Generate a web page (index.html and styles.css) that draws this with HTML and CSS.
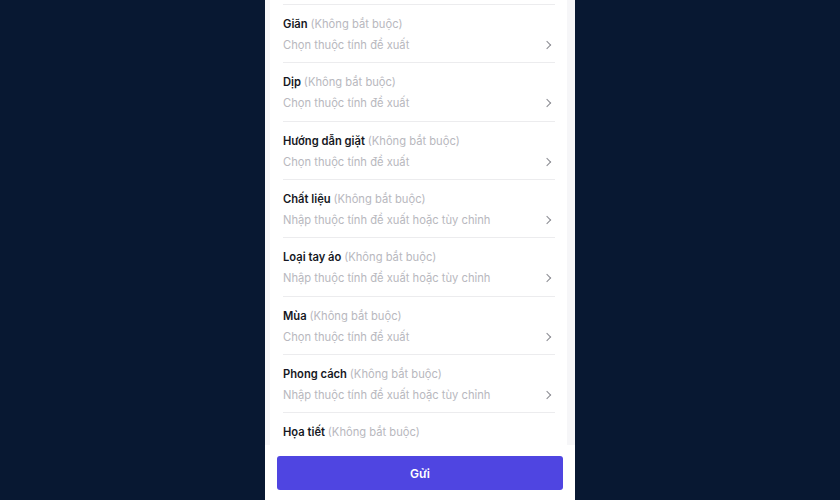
FILE: index.html
```html
<!DOCTYPE html>
<html lang="vi">
<head>
    <meta charset="UTF-8">
    <meta name="viewport" content="width=device-width, initial-scale=1.0">
    <title>Thuộc tính sản phẩm</title>
    <link rel="stylesheet" href="styles.css">
</head>
<body>
    <div class="phone">
        <div class="scroll">
            <div class="card">
                <div class="row">
                    <p class="label">Giãn <span class="optional">(Không bắt buộc)</span></p>
                    <div class="value"><span>Chọn thuộc tính đề xuất</span><i class="chevron"></i></div>
                </div>
                <div class="row">
                    <p class="label">Dịp <span class="optional">(Không bắt buộc)</span></p>
                    <div class="value"><span>Chọn thuộc tính đề xuất</span><i class="chevron"></i></div>
                </div>
                <div class="row">
                    <p class="label">Hướng dẫn giặt <span class="optional">(Không bắt buộc)</span></p>
                    <div class="value"><span>Chọn thuộc tính đề xuất</span><i class="chevron"></i></div>
                </div>
                <div class="row">
                    <p class="label">Chất liệu <span class="optional">(Không bắt buộc)</span></p>
                    <div class="value"><span>Nhập thuộc tính đề xuất hoặc tùy chỉnh</span><i class="chevron"></i></div>
                </div>
                <div class="row">
                    <p class="label">Loại tay áo <span class="optional">(Không bắt buộc)</span></p>
                    <div class="value"><span>Nhập thuộc tính đề xuất hoặc tùy chỉnh</span><i class="chevron"></i></div>
                </div>
                <div class="row">
                    <p class="label">Mùa <span class="optional">(Không bắt buộc)</span></p>
                    <div class="value"><span>Chọn thuộc tính đề xuất</span><i class="chevron"></i></div>
                </div>
                <div class="row">
                    <p class="label">Phong cách <span class="optional">(Không bắt buộc)</span></p>
                    <div class="value"><span>Nhập thuộc tính đề xuất hoặc tùy chỉnh</span><i class="chevron"></i></div>
                </div>
                <div class="row">
                    <p class="label">Họa tiết <span class="optional">(Không bắt buộc)</span></p>
                </div>
            </div>
        </div>
        <div class="footer">
            <button class="submit">Gửi</button>
        </div>
    </div>
</body>
</html>
```

FILE: styles.css
```css
* {
    margin: 0;
    padding: 0;
    box-sizing: border-box;
}

body {
    font-family: Inter, "Noto Sans", sans-serif;
    background-color: #081832;
    display: flex;
    justify-content: center;
    height: 100vh;
    overflow: hidden;
}

.phone {
    width: 310px;
    height: 500px;
    display: flex;
    flex-direction: column;
    background-color: #f6f6f8;
}

.scroll {
    flex: 1;
    overflow: hidden;
    padding: 0 8px 0 5px;
}

.card {
    background-color: white;
    padding: 4px 12px 20px 13px;
}

.row {
    border-top: 1px solid #ececee;
    padding: 11px 0 9.33px;
}

.label {
    font-size: 11.2px;
    line-height: 16px;
    font-weight: 600;
    color: #161823;
    margin-bottom: 5px;
}

.optional {
    font-weight: 400;
    color: #b8b8be;
}

.value {
    display: flex;
    justify-content: space-between;
    align-items: center;
    font-size: 11.2px;
    line-height: 16px;
    color: #b8b8be;
}

.chevron {
    width: 6px;
    height: 6px;
    border-top: 1.2px solid #8a8b91;
    border-right: 1.2px solid #8a8b91;
    transform: rotate(45deg);
    margin-right: 5px;
}

.footer {
    background-color: white;
    padding: 11px 12px 10px;
}

.submit {
    width: 100%;
    height: 34px;
    border: none;
    border-radius: 3px;
    background-color: #4f45e1;
    color: white;
    font-family: inherit;
    font-size: 12px;
    font-weight: 600;
}
```
